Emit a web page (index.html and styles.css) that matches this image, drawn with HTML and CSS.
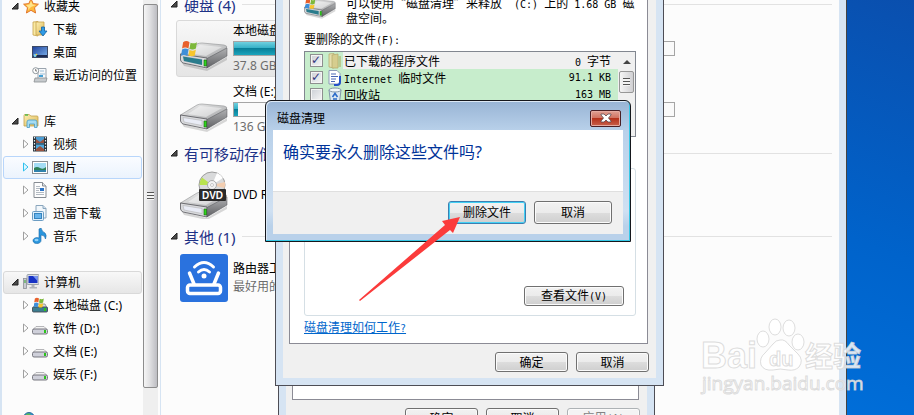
FILE: index.html
```
<!DOCTYPE html>
<html lang="zh-CN">

<head>
    <meta charset="UTF-8">
    <meta name="viewport" content="width=device-width, initial-scale=1.0">
    <title>磁盘清理</title>
    <link rel="stylesheet" href="styles.css">
</head>
<body>
    <svg class="defs" aria-hidden="true">
        <defs>
            <linearGradient id="metal" x1="0" y1="0" x2="1" y2="1">
                <stop offset="0" stop-color="#f4f4f4"/>
                <stop offset="0.5" stop-color="#c9cacb"/>
                <stop offset="1" stop-color="#9b9c9e"/>
            </linearGradient>
            <linearGradient id="side" x1="0" y1="0" x2="0" y2="1">
                <stop offset="0" stop-color="#b0b1b3"/>
                <stop offset="1" stop-color="#5f6063"/>
            </linearGradient>
            <linearGradient id="folder" x1="0" y1="0" x2="1" y2="1">
                <stop offset="0" stop-color="#fdf0b4"/>
                <stop offset="1" stop-color="#dcb653"/>
            </linearGradient>
            <linearGradient id="screen" x1="0" y1="0" x2="1" y2="1">
                <stop offset="0" stop-color="#1c3f9a"/>
                <stop offset="1" stop-color="#7fb6ee"/>
            </linearGradient>
        </defs>
        <symbol id="open" viewBox="0 0 8 8"><path d="M7 1V7H1Z" fill="#4a4a4a" stroke="#222"/></symbol>
        <symbol id="closed" viewBox="0 0 8 10"><path d="M1.500 1L6 5L1.500 9Z" fill="#fff" stroke="#a0a0a0"/></symbol>
        <symbol id="closed-hot" viewBox="0 0 8 10"><path d="M1.500 1L6 5L1.500 9Z" fill="#dff6ff" stroke="#2fc1ee"/></symbol>
        <symbol id="flag" viewBox="0 0 16 16">
            <path d="M2 2Q5 0 8 2L7 8Q4 6 1 8Z" fill="#e8602c"/>
            <path d="M9 2.500Q12 4 15 2L14 8Q11 10 8 8Z" fill="#7db83a"/>
            <path d="M1 9Q4 7 7 9L6 15Q3 13 0 15Z" fill="#3f8fd8"/>
            <path d="M8 9.500Q11 11 14 9L13 14.500Q10 16 7 14.500Z" fill="#f8c62c"/>
        </symbol>
        <symbol id="drive" viewBox="0 0 48 48">
            <path d="M2 38L27 44L47 32L47 35L27 46L4 41Z" fill="#000" opacity="0.15"/>
            <path d="M0.500 29L17 19Q19 18 22 18L44 20Q48 21 46.500 23L27 34Z" fill="url(#metal)" stroke="#8f9092" stroke-width="0.600"/>
            <path d="M8 28L20 20L42 22L26 31Z" fill="#fff" opacity="0.45"/>
            <path d="M0.500 29L27 33V43L3 38Q1 37 0.500 35Z" fill="#d9dadd" stroke="#55565a" stroke-width="0.800"/>
            <path d="M3 31.500L22 34.500V39.500L4 36Z" fill="#e9ecf6" stroke="#aaa" stroke-width="0.500"/>
            <path d="M27 33.500L47 23V31L27 43Z" fill="url(#side)" stroke="#55565a" stroke-width="0.500"/>
            <path d="M24 35h2.500v6H24Z" fill="#2fd41c" stroke="#14670c" stroke-width="0.600"/>
        </symbol>
        <symbol id="system-drive" viewBox="0 0 48 48">
            <use href="#drive"/>
            <path d="M3 31.500L22 34.500V40L4 36Z" fill="#2a7c8c"/>
            <use href="#flag" x="1" y="15" width="17" height="17"/>
        </symbol>
        <symbol id="dvd" viewBox="0 0 48 48">
            <use href="#drive" y="3"/>
            <circle cx="32" cy="14" r="13" fill="#d9dadb" stroke="#9d9d9d"/>
            <path d="M32 14L19.500 14A13 13 0 0 1 22 6.500Z" fill="#b9e34e"/>
            <path d="M32 14L37 2A13 13 0 0 1 43 7Z" fill="#fff"/>
            <path d="M32 14L44.500 17A13 13 0 0 0 45 11Z" fill="#f2cdb0"/>
            <circle cx="32" cy="14" r="4.500" fill="#f2f2f2" stroke="#aaa"/>
            <circle cx="32" cy="14" r="1.500" fill="#fff" stroke="#999" stroke-width="0.500"/>
            <rect x="19" y="18" width="27" height="12" rx="1" fill="#2a2a2a"/>
            <text class="dvd-text" x="32.500" y="27.500" text-anchor="middle">DVD</text>
        </symbol>
        <symbol id="small-drive" viewBox="0 0 16 16">
            <path d="M1 9.500L4 6.500H12L15 9.500Z" fill="#f3f3f3" stroke="#a5a5a8" stroke-width="0.800"/>
            <rect x="0.500" y="9" width="15" height="5" rx="1.500" fill="#cfd0da" stroke="#6b6c74" stroke-width="0.900"/>
            <rect x="12" y="10" width="2" height="3" fill="#2bc41a"/>
        </symbol>
        <symbol id="small-system" viewBox="0 0 16 16">
            <path d="M1 11L4 7H13L15 11Z" fill="#d8dadd" stroke="#85868a" stroke-width="0.800"/>
            <rect x="0.500" y="10" width="15" height="5" rx="1" fill="#3c7d90" stroke="#454d55" stroke-width="0.900"/>
            <rect x="12" y="11" width="2" height="3" fill="#2bc41a"/>
            <use href="#flag" x="1.500" y="0" width="11" height="11"/>
        </symbol>
        <symbol id="star" viewBox="0 0 16 16">
            <path d="M8 0.800L10.200 5.600L15.400 6.200L11.500 9.700L12.600 15L8 12.300L3.400 15L4.500 9.700L0.600 6.200L5.800 5.600Z" fill="#fdbb3d" stroke="#e2762c"/>
            <path d="M8 3L9.500 6.500L13 7L8 9L5 12L5.500 9.500L3 7L6.500 6.500Z" fill="#ffe48c"/>
        </symbol>
        <symbol id="download" viewBox="0 0 16 16">
            <path d="M1 1L6 0.500V15L1 14Z" fill="#f9e9a4" stroke="#c6a24c" stroke-width="0.800"/>
            <path d="M4 1H12V14H4Z" fill="url(#folder)" stroke="#c6a24c" stroke-width="0.800"/>
            <path d="M9.500 6H12.500V10H15L11 15L7 10H9.500Z" fill="#2f9be6" stroke="#1463a5" stroke-width="0.800"/>
        </symbol>
        <symbol id="desktop" viewBox="0 0 16 16">
            <rect x="0.500" y="2.500" width="15" height="11" fill="url(#screen)" stroke="#3c4a66"/>
            <rect x="1" y="11" width="14" height="2" fill="#1d2b52"/>
            <circle cx="3" cy="11.500" r="1.500" fill="#7fd6f2"/>
            <circle cx="4.500" cy="10.500" r="0.800" fill="#f5d33b"/>
        </symbol>
        <symbol id="recent" viewBox="0 0 16 16">
            <path d="M6 1.500H14V13H6Z" fill="#f7f9fb" stroke="#9aa4ae"/>
            <path d="M8 4H12M8 7H13" stroke="#9bbcd4"/>
            <path d="M7 8H11V10H7Z" fill="#46a0d4"/>
            <path d="M3 11H15L14 15H2Z" fill="#c6cacd" stroke="#8b8f92" stroke-width="0.800"/>
            <circle cx="3.700" cy="3.700" r="3" fill="#fff" stroke="#8f979d"/>
            <path d="M3.700 2V4H5" fill="none" stroke="#555" stroke-width="0.800"/>
        </symbol>
        <symbol id="library" viewBox="0 0 16 16">
            <path d="M1 2.500Q1 1.500 2 1.500H6L8 3H14Q15 3 15 4V13H1Z" fill="url(#folder)" stroke="#c2a14d" stroke-width="0.800"/>
            <path d="M2 2H5" stroke="#54b848" stroke-width="1.500"/>
            <path d="M4 14.500V9Q4 7 6 7H12Q14 7 14 9V14.500H11.500V11H6.500V14.500Z" fill="#a5dcf2" stroke="#4a9cc4" stroke-width="0.800"/>
        </symbol>
        <symbol id="video" viewBox="0 0 16 16">
            <rect x="1" y="0.500" width="14" height="15" fill="#27323b"/>
            <rect x="4" y="1" width="8" height="6.500" fill="#4b9bd2"/>
            <rect x="4" y="8.500" width="8" height="6.500" fill="#4fa9de"/>
            <path d="M4 3L8 6L12 3V7H4ZM4 13L8 10L12 13V15H4Z" fill="#995441"/>
            <path d="M2.500 1V15M13.500 1V15" stroke="#e8eef2" stroke-width="1.200" stroke-dasharray="1.500 1.500"/>
        </symbol>
        <symbol id="picture" viewBox="0 0 16 16">
            <rect x="0.500" y="2.500" width="15" height="12" fill="#fff" stroke="#8a9096"/>
            <rect x="2" y="4" width="12" height="9" fill="#a3dcf5"/>
            <path d="M2 9Q5 7 8 9T14 8V11H2Z" fill="#2e8058"/>
            <path d="M2 11H14V13H2Z" fill="#2f82ad"/>
        </symbol>
        <symbol id="doc" viewBox="0 0 16 16">
            <path d="M2 0.500H10.500L14 4V15.500H2Z" fill="#fdfdfd" stroke="#878c93"/>
            <path d="M10.500 0.500V4H14" fill="#dde2e7" stroke="#878c93"/>
            <path d="M4 4.500H8M4 6.500H8M4 8.500H7M4 10.500H12M4 12.500H12" stroke="#a0a8b3" stroke-width="0.800"/>
            <rect x="8" y="6" width="4" height="3" fill="#2b73c6"/>
        </symbol>
        <symbol id="thunder" viewBox="0 0 16 16">
            <path d="M4 0.500H11L14 3.500V13H4Z" fill="#f2f7fb" stroke="#8aa6bd"/>
            <path d="M11 0.500V3.500H14" fill="#d2e1ee" stroke="#8aa6bd"/>
            <rect x="0.500" y="6.500" width="11" height="9" rx="1" fill="#deeffc" stroke="#6c9dc3"/>
            <rect x="2.500" y="8.500" width="7" height="5" fill="#67b4ec" stroke="#3684be"/>
        </symbol>
        <symbol id="music" viewBox="0 0 16 16">
            <path d="M7 1L9 0Q10 4 13 5Q15 7 13.500 11Q13 7 9 7V12.500A4 3 0 1 1 7 10Z" fill="#2b95dc" stroke="#1868a7" stroke-width="0.600"/>
            <ellipse cx="4.500" cy="12" rx="2" ry="1.200" fill="#8ed1fa"/>
        </symbol>
        <symbol id="computer" viewBox="0 0 16 16">
            <rect x="0.500" y="4.500" width="3" height="10" fill="#c9ccd2" stroke="#8d9097" stroke-width="0.800"/>
            <path d="M2 6V9" stroke="#35a52f"/>
            <rect x="4" y="0.500" width="12" height="10" rx="1" fill="#d9dde3" stroke="#8a909a" stroke-width="0.800"/>
            <rect x="5.500" y="2" width="9" height="7" fill="#1732c4"/>
            <path d="M10 2H14.500V7Z" fill="#7795f1"/>
            <path d="M8.500 11H11.500V13H14V14.500H6.500V13H8.500Z" fill="#aeb2b9"/>
        </symbol>
        <symbol id="network" viewBox="0 0 16 16">
            <circle cx="7" cy="6" r="5.500" fill="#2f8fd0" stroke="#2a6c9c"/>
            <path d="M4 2Q8 0 9 3L6 6L3 5Z" fill="#58b85a"/>
        </symbol>
        <symbol id="old-folder" viewBox="0 0 16 16">
            <path d="M2 1L7 0.500V15L2 14Z" fill="#e6dfae" stroke="#b8ac70" stroke-width="0.800"/>
            <path d="M5 2L11 1V15L5 15Z" fill="#d6cd8e" stroke="#b8ac70" stroke-width="0.800"/>
            <path d="M11 3H14V14H11Z" fill="#b9c98f"/>
        </symbol>
        <symbol id="net-file" viewBox="0 0 16 16">
            <path d="M2 0.500H10L13 3.500V14H2Z" fill="#fff" stroke="#8d9bb8"/>
            <path d="M4 4H9M4 6.500H11M4 9H9M4 11.500H8" stroke="#4a67b5"/>
            <path d="M13 6V12Q13 15 10 15H7" fill="none" stroke="#2450c8" stroke-width="2"/>
        </symbol>
        <symbol id="bin" viewBox="0 0 16 16">
            <path d="M2 3H14L12.500 15H3.500Z" fill="#dbe8f3" stroke="#8296a8"/>
            <ellipse cx="8" cy="3" rx="6" ry="2" fill="#f3f8fc" stroke="#8296a8"/>
            <path d="M5.500 10L8 6.500L10.500 10M6 12H10" fill="none" stroke="#2b6bc9" stroke-width="1.600"/>
        </symbol>
    </svg>

    <div class="desktop">
        <div class="explorer">
            <nav class="sidebar">
                <ul class="tree">
                    <li><a class="node root" href="#"><svg class="twist"><use href="#open"/></svg><svg class="icon"><use href="#star"/></svg>收藏夹</a></li>
                    <li><a class="node" href="#"><svg class="icon"><use href="#download"/></svg>下载</a></li>
                    <li><a class="node" href="#"><svg class="icon"><use href="#desktop"/></svg>桌面</a></li>
                    <li><a class="node" href="#"><svg class="icon"><use href="#recent"/></svg>最近访问的位置</a></li>
                </ul>
                <ul class="tree">
                    <li><a class="node root" href="#"><svg class="twist"><use href="#open"/></svg><svg class="icon"><use href="#library"/></svg>库</a></li>
                    <li><a class="node sub" href="#"><svg class="twist"><use href="#closed"/></svg><svg class="icon"><use href="#video"/></svg>视频</a></li>
                    <li><a class="node sub hot" href="#"><svg class="twist"><use href="#closed-hot"/></svg><svg class="icon"><use href="#picture"/></svg>图片</a></li>
                    <li><a class="node sub" href="#"><svg class="twist"><use href="#closed"/></svg><svg class="icon"><use href="#doc"/></svg>文档</a></li>
                    <li><a class="node sub" href="#"><svg class="twist"><use href="#closed"/></svg><svg class="icon"><use href="#thunder"/></svg>迅雷下载</a></li>
                    <li><a class="node sub" href="#"><svg class="twist"><use href="#closed"/></svg><svg class="icon"><use href="#music"/></svg>音乐</a></li>
                </ul>
                <ul class="tree">
                    <li><a class="node root current" href="#"><svg class="twist"><use href="#open"/></svg><svg class="icon"><use href="#computer"/></svg>计算机</a></li>
                    <li><a class="node sub" href="#"><svg class="twist"><use href="#closed"/></svg><svg class="icon"><use href="#small-system"/></svg>本地磁盘 (C:)</a></li>
                    <li><a class="node sub" href="#"><svg class="twist"><use href="#closed"/></svg><svg class="icon"><use href="#small-drive"/></svg>软件 (D:)</a></li>
                    <li><a class="node sub" href="#"><svg class="twist"><use href="#closed"/></svg><svg class="icon"><use href="#small-drive"/></svg>文档 (E:)</a></li>
                    <li><a class="node sub" href="#"><svg class="twist"><use href="#closed"/></svg><svg class="icon"><use href="#small-drive"/></svg>娱乐 (F:)</a></li>
                </ul>
                <div class="network"><svg class="icon"><use href="#network"/></svg></div>
            </nav>
            <div class="scrollbar"><div class="thumb"><span class="grip"></span></div></div>

            <main class="content">
                <section class="group">
                    <h2><svg class="twist"><use href="#open"/></svg>硬盘 (4)</h2>
                    <div class="tiles">
                        <div class="tile selected">
                            <svg class="big-icon"><use href="#system-drive"/></svg>
                            <div class="info">
                                <p>本地磁盘 (C:)</p>
                                <div class="bar"><div class="used" style="width: 62%"></div></div>
                                <p class="note">37.8 GB 可用</p>
                            </div>
                        </div>
                        <div class="tile">
                            <svg class="big-icon"><use href="#drive"/></svg>
                            <div class="info"><p></p><div class="bar"></div></div>
                        </div>
                        <div class="tile">
                            <svg class="big-icon"><use href="#drive"/></svg>
                            <div class="info">
                                <p>文档 (E:)</p>
                                <div class="bar"><div class="used" style="width: 2%"></div></div>
                                <p class="note">136 GB 可用</p>
                            </div>
                        </div>
                        <div class="tile">
                            <svg class="big-icon"><use href="#drive"/></svg>
                            <div class="info"><p></p><div class="bar"></div></div>
                        </div>
                    </div>
                </section>
                <section class="group">
                    <h2><svg class="twist"><use href="#open"/></svg>有可移动存储的设备 (1)</h2>
                    <div class="tiles">
                        <div class="tile">
                            <svg class="big-icon"><use href="#dvd"/></svg>
                            <div class="info"><p>DVD RW 驱动器</p></div>
                        </div>
                    </div>
                </section>
                <section class="group">
                    <h2><svg class="twist"><use href="#open"/></svg>其他 (1)</h2>
                    <div class="tiles">
                        <div class="tile">
                            <svg class="big-icon" viewBox="0 0 48 48">
                                <rect width="48" height="48" rx="3" fill="#2a72de"/>
                                <g fill="none" stroke="#fff" stroke-width="3.500" stroke-linecap="round">
                                    <rect x="7.500" y="31" width="33" height="8.500" rx="2.500"/>
                                    <path d="M14 30L9.500 19M34 30L38.500 19"/>
                                    <path d="M14.500 13Q24 4 33.500 13" stroke-width="3"/>
                                    <path d="M18.500 18Q24 13 29.500 18" stroke-width="3"/>
                                </g>
                                <circle cx="24" cy="22" r="2.500" fill="#fff"/>
                            </svg>
                            <div class="info">
                                <p>路由器工具</p>
                                <p class="note">最好用的路由器</p>
                            </div>
                        </div>
                    </div>
                </section>
            </main>
        </div>

        <div class="window properties">
            <div class="client">
                <div class="panel"></div>
                <div class="actions">
                    <button type="button">确定</button>
                    <button type="button">取消</button>
                    <button type="button" disabled>应用<span class="latin">(A)</span></button>
                </div>
            </div>
        </div>

        <div class="window cleanup">
            <div class="client">
                <div class="panel">
                    <div class="summary">
                        <svg class="medium-icon"><use href="#system-drive"/></svg>
                        <p>可以使用“磁盘清理”来释放<span class="latin">  (C:) </span>上的<span class="latin"> 1.68 GB </span>磁盘空间。</p>
                    </div>
                    <p class="list-label">要删除的文件<span class="latin">(F):</span></p>
                    <div class="file-list">
                        <div class="files">
                            <div class="file picked">
                                <input type="checkbox" id="programs" checked>
                                <svg class="icon"><use href="#old-folder"/></svg>
                                <label for="programs">已下载的程序文件</label>
                                <span class="size"><span class="latin">0 </span>字节</span>
                            </div>
                            <div class="file">
                                <input type="checkbox" id="internet" checked>
                                <svg class="icon"><use href="#net-file"/></svg>
                                <label for="internet"><span class="latin">Internet </span>临时文件</label>
                                <span class="size latin">91.1 KB</span>
                            </div>
                            <div class="file">
                                <input type="checkbox" id="recycle">
                                <svg class="icon"><use href="#bin"/></svg>
                                <label for="recycle">回收站</label>
                                <span class="size latin">163 MB</span>
                            </div>
                        </div>
                        <div class="list-scroll">
                            <svg class="up" viewBox="0 0 8 4"><path d="M4 0L8 4H0Z" fill="#444"/></svg>
                            <div class="list-thumb"><span class="grip"></span></div>
                        </div>
                    </div>
                    <div class="details">
                        <button type="button" class="wide">查看文件<span class="latin">(V)</span></button>
                    </div>
                    <a class="help" href="#">磁盘清理如何工作<span class="latin">?</span></a>
                </div>
                <div class="actions">
                    <button type="button">确定</button>
                    <button type="button">取消</button>
                </div>
            </div>
        </div>

        <div class="confirm" role="dialog" aria-labelledby="confirm-title">
            <div class="titlebar">
                <span id="confirm-title">磁盘清理</span>
                <button type="button" class="close" aria-label="关闭">
                    <svg viewBox="0 0 12 10"><path d="M1 1H4L6 3L8 1H11V2L8.500 5L11 8V9H8L6 7L4 9H1V8L3.500 5L1 2Z" fill="#fff" stroke="#5d4a50" stroke-width="0.800"/></svg>
                </button>
            </div>
            <p class="question">确实要永久删除这些文件吗?</p>
            <div class="choices">
                <button type="button" class="default">删除文件</button>
                <button type="button">取消</button>
            </div>
        </div>

        <svg class="pointer" viewBox="0 0 104 86" aria-hidden="true">
            <path d="M0 84L86 9L83 5L101 1L94 17L91 14L1 85Z" fill="#fb3b3b"/>
        </svg>

        <svg class="watermark" viewBox="0 0 170 84">
            <g class="mark">
                <ellipse cx="63" cy="22" rx="6" ry="8"/>
                <ellipse cx="75" cy="10" rx="6" ry="8"/>
                <ellipse cx="89" cy="11" rx="6" ry="8"/>
                <ellipse cx="98" cy="25" rx="6" ry="8"/>
                <path d="M80 23Q85 22 89 28L98 37Q104 43 99 50Q95 54 88 53Q80 51 73 53Q64 54 61 48Q59 41 65 36L73 27Q76 23 80 23Z"/>
            </g>
            <text class="mark bai" x="1" y="51">Bai</text>
            <text class="mark du" x="69" y="49">du</text>
            <text class="mark jingyan" x="105" y="50">经验</text>
            <text class="mark site" x="2" y="73">jingyan.baidu.com</text>
        </svg>
    </div>
</body>

</html>
```
FILE: styles.css
```
* {
    box-sizing: border-box;
}

body {
    margin: 0;
    font-family: "Noto Sans", "Noto Sans CJK SC", sans-serif;
    font-size: 12px;
    color: #000;
}

p,
h2,
ul {
    margin: 0;
    padding: 0;
}

.defs {
    position: absolute;
    width: 0;
    height: 0;
}

.desktop {
    position: relative;
    height: 100vh;
    overflow: hidden;
    background: linear-gradient(200deg, #0a4fae 0%, #0063cb 35%, #0073df 70%, #0077e4 100%);
}

/* explorer window */

.explorer {
    display: flex;
    height: 100%;
    margin-right: 67px;
    border-left: 2px solid #d6e4f3;
    border-right: 1px solid #444;
    background-color: #fcfcfc;
    overflow: hidden;
}

.sidebar {
    width: 141px;
    flex: none;
    margin-top: -5px;
    padding: 0 1px;
}

.tree {
    list-style: none;
    margin-bottom: 23px;
}

.node {
    display: flex;
    align-items: center;
    height: 23px;
    padding-left: 28px;
    padding-bottom: 1px;
    border: 1px solid transparent;
    border-radius: 3px;
    color: #000;
    text-decoration: none;
    white-space: nowrap;
}

.node.root {
    padding-left: 7px;
}

.node.sub {
    padding-left: 18px;
}

.node.hot {
    border-color: #b8d6fb;
    background: linear-gradient(#fafcff, #ebf3fd);
}

.node.current {
    border-color: #d9d9d9;
    background: linear-gradient(#f8f8f8, #e6e6e6);
}

.icon {
    width: 16px;
    height: 16px;
    flex: none;
    margin-right: 5px;
}

.twist {
    width: 8px;
    height: 8px;
    flex: none;
    margin-right: 4px;
}

.sub .twist {
    height: 10px;
    margin-right: 2px;
}

.network {
    padding: 3px 0 0 19px;
}

.scrollbar {
    display: flex;
    flex-direction: column;
    width: 15px;
    flex: none;
    padding: 4px 0 27px;
    background-color: #efefef;
}

.thumb {
    display: flex;
    flex: 1;
    align-items: center;
    justify-content: center;
    border: 1px solid #8c8c8c;
    border-radius: 2px;
    background: linear-gradient(to right, #f5f5f5, #e0e0e2 45%, #bdbdc2);
}

.grip {
    width: 7px;
    height: 8px;
    background: repeating-linear-gradient(#555 0, #555 1px, #f4f4f4 1px, #f4f4f4 3px);
}

.content {
    flex: 1;
    min-width: 0;
    margin-left: 2px;
    margin-top: -5px;
    padding: 0 7px 0 9px;
    border-left: 1px solid #d6e4f3;
    border-right: 7px solid #d6e4f3;
}

.group {
    margin-bottom: 6px;
}

.group h2 {
    display: flex;
    align-items: center;
    height: 20px;
    margin-bottom: 5px;
    padding-bottom: 2px;
    font-size: 15px;
    font-weight: normal;
    color: #1e3287;
    white-space: nowrap;
}

.group h2 .twist {
    margin-right: 6px;
}

.group h2::after {
    content: "";
    flex: 1;
    height: 1px;
    margin-left: 7px;
    background-color: #e2e2e2;
}

.tiles {
    display: grid;
    grid-template-columns: repeat(auto-fill, 248px);
    gap: 4px 8px;
    padding-left: 6px;
}

.tile {
    display: flex;
    align-items: center;
    gap: 5px;
    padding: 1px 3px;
    border: 1px solid transparent;
    border-radius: 3px;
}

.tile.selected {
    border-color: #d9d9d9;
    background: linear-gradient(#f8f8f8, #e5e5e5);
}

.big-icon {
    width: 48px;
    height: 48px;
    flex: none;
}

.info {
    flex: 1;
    line-height: 18px;
    white-space: nowrap;
}

.info p {
    min-height: 18px;
}

.note {
    color: #6d6d6d;
}

.bar {
    height: 15px;
    margin: 1px 1px 1px 0;
    border: 1px solid #a5a5a5;
    background-color: #fafafa;
}

.bar:last-child {
    margin-bottom: 19px;
}

.used {
    height: 100%;
    background: linear-gradient(#6fd0df 0%, #35b1c7 45%, #087f98 50%, #1ba4bc 100%);
}

.dvd-text {
    font-family: "Liberation Sans", sans-serif;
    font-size: 10px;
    font-weight: bold;
    fill: #fff;
}

/* dialogs */

button {
    height: 20px;
    padding: 0;
    border: 1px solid #707070;
    border-radius: 3px;
    box-shadow: inset 0 0 0 1px #fbfbfb;
    background: linear-gradient(#f2f2f2 0%, #ebebeb 50%, #dddddd 50%, #cfcfcf 100%);
    font-family: inherit;
    font-size: 12px;
    line-height: 16px;
    color: #000;
}

button:disabled {
    border-color: #adb2b5;
    background: #f4f4f4;
    color: #838383;
}

/* half-width characters beside the 12px Chinese text */
.latin {
    font-family: "DejaVu Sans Mono", monospace;
    font-size: 10px;
    white-space: pre-wrap;
}

.window {
    position: absolute;
    border: 1px solid #4d4d55;
    padding: 0 7px 7px;
    background-color: #d6e4f3;
    font-family: "Noto Sans CJK SC", sans-serif;
}

.client {
    background-color: #f0f0f0;
    padding-bottom: 6px;
}

.panel {
    margin: 0 8px 0 6px;
    border: 1px solid #8b8b95;
    background-color: #fff;
}

.actions {
    display: flex;
    justify-content: flex-end;
    gap: 8px;
    padding: 8px 7px 0;
}

.actions button {
    width: 73px;
}

.properties {
    left: 278px;
    top: 360px;
    width: 377px;
}

.properties .panel {
    height: 39px;
}

.cleanup {
    left: 275px;
    top: -20px;
    width: 389px;
}

.cleanup .panel {
    padding: 14px 11px 8px 14px;
}

.summary {
    display: flex;
    gap: 10px;
    height: 26px;
    line-height: 13px;
}

.summary p {
    flex: 1;
}

.medium-icon {
    width: 32px;
    height: 32px;
    flex: none;
    margin-top: -8px;
}

.list-label {
    height: 16px;
    margin-top: 9px;
    line-height: 16px;
}

.file-list {
    display: flex;
    height: 86px;
    margin-top: 4px;
    border: 1px solid #828790;
    background-color: #c7edcc;
}

.files {
    flex: 1;
}

.file {
    display: flex;
    align-items: center;
    height: 17px;
    padding: 0 7px 0 5px;
}

.file input {
    appearance: none;
    width: 13px;
    height: 13px;
    margin: 0 4px 0 0;
    border: 1px solid #8e8f8f;
    box-shadow: inset 0 0 0 1px #f4f4f4;
    background: linear-gradient(135deg, #cbcfd5, #f6f6f6);
}

.file input:checked::after {
    content: "✓";
    display: block;
    font-family: "DejaVu Sans", sans-serif;
    font-size: 12px;
    font-weight: bold;
    line-height: 10px;
    color: #31347c;
}

.file .icon {
    margin-right: 0;
}

.file label {
    flex: 1;
    height: 17px;
    padding-left: 1px;
    line-height: 17px;
}

.file.picked {
    padding-right: 0;
}

.file.picked label,
.file.picked .size {
    background-color: #f0f0f0;
}

.file.picked .size {
    height: 17px;
    padding-right: 7px;
    line-height: 17px;
}

.list-scroll {
    display: flex;
    flex-direction: column;
    align-items: center;
    width: 17px;
    background-color: #f0f0f0;
}

.up {
    width: 8px;
    height: 4px;
    margin: 8px 0 7px;
}

.list-thumb {
    display: flex;
    align-items: center;
    justify-content: center;
    width: 15px;
    height: 22px;
    border: 1px solid #979797;
    border-radius: 2px;
    background: linear-gradient(to right, #f5f5f5, #d0d0d3);
}

.details {
    display: flex;
    align-items: flex-end;
    justify-content: flex-end;
    height: 148px;
    margin-top: 31px;
    padding: 9px 11px;
    border: 1px solid #d5dfe5;
    border-radius: 3px;
}

.wide {
    width: 100px;
}

.help {
    display: block;
    height: 16px;
    margin-top: 3px;
    line-height: 16px;
    color: #0066cc;
}

.confirm {
    position: absolute;
    left: 265px;
    top: 100px;
    width: 366px;
    padding: 0 7px 7px;
    border: 1px solid #15171c;
    border-radius: 6px 6px 0 0;
    box-shadow: inset -1px -1px 0 #35c8e6, inset 1px 1px 0 #dce8f5;
    background: linear-gradient(#98b4d5, #b9d1ea 30px, #cfe0f2 110px, #b9d1ea 125px);
}

.titlebar {
    display: flex;
    align-items: center;
    justify-content: space-between;
    height: 29px;
    padding: 5px 2px 0 4px;
}

.close {
    display: flex;
    align-items: center;
    justify-content: center;
    width: 31px;
    height: 17px;
    border-color: #4a1f25;
    border-radius: 2px;
    box-shadow: inset 0 0 0 1px #e5aaa0;
    background: linear-gradient(#e0a195 0%, #d0705f 48%, #b5321c 50%, #c9614b 100%);
}

.close svg {
    width: 12px;
    height: 10px;
}

.question {
    height: 61px;
    padding: 10px;
    background-color: #fff;
    font-size: 16px;
    line-height: 24px;
    color: #003399;
}

.choices {
    display: flex;
    justify-content: flex-end;
    gap: 8px;
    padding: 9px 11px 10px;
    border-top: 1px solid #dfdfdf;
    background-color: #f0f0f0;
}

.choices button {
    width: 78px;
    height: 23px;
}

.choices .default {
    border-color: #3c7fb1;
    box-shadow: inset 0 0 0 1px #43d1f5;
}

.pointer {
    position: absolute;
    left: 359px;
    top: 216px;
    width: 104px;
    height: 86px;
}

.watermark {
    position: absolute;
    left: 700px;
    top: 317px;
    width: 170px;
    height: 84px;
}

.mark {
    fill: #fff;
    fill-opacity: 0.85;
    stroke: #d4d4d4;
    stroke-opacity: 0.8;
    stroke-width: 1px;
}

.bai {
    font-family: "Liberation Sans", sans-serif;
    font-size: 36px;
    font-weight: bold;
}

.du {
    font-family: "Liberation Sans", sans-serif;
    font-size: 20px;
    font-weight: bold;
}

.jingyan {
    font-family: "Noto Sans CJK SC", sans-serif;
    font-size: 28px;
    font-weight: bold;
}

.site {
    font-family: "Open Sans", sans-serif;
    font-size: 19px;
}
```
